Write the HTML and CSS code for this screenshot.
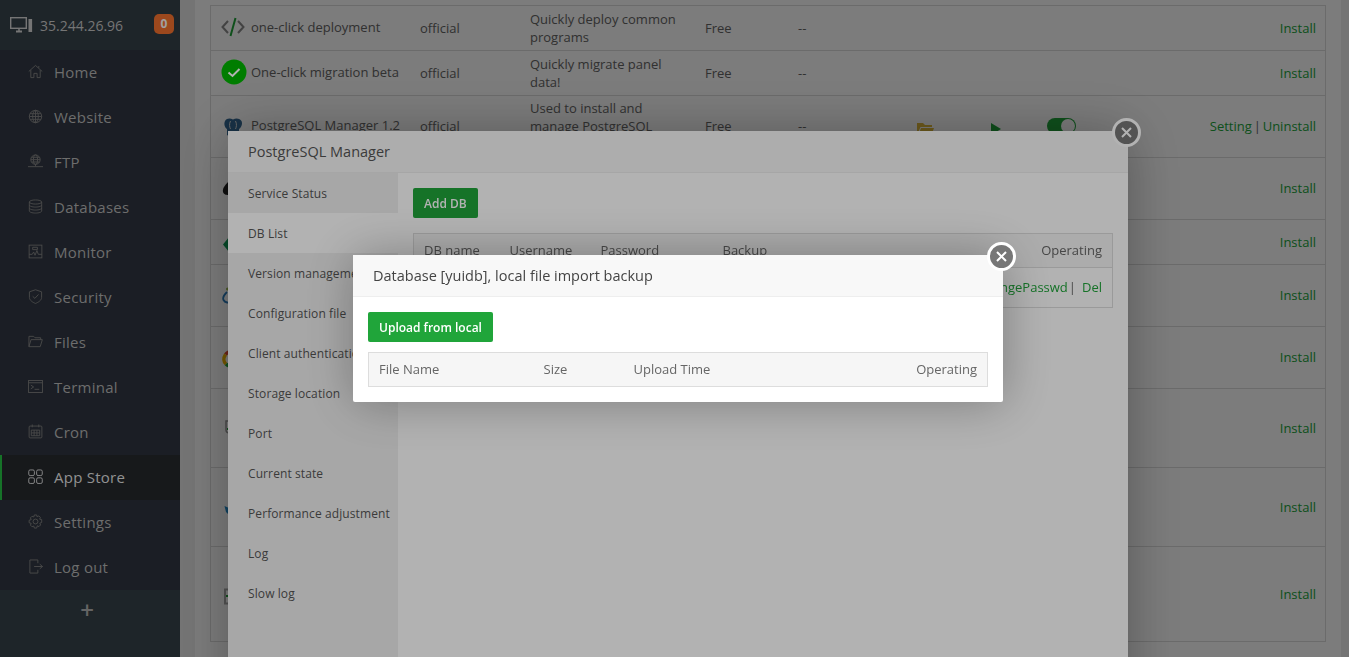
FILE: index.html
```html
<!DOCTYPE html>
<html lang="en">
<head>
<meta charset="utf-8">
<title>App Store</title>
<link rel="stylesheet" href="styles.css">
</head>
<body>
<aside class="sidebar">
  <div class="server">
    <svg class="server-icon" width="23" height="16" viewBox="0 0 23 16" fill="none" stroke="currentColor"><rect x="0.7" y="0.7" width="15.6" height="10.6" stroke-width="1.4"/><path d="M6 14.5h6" stroke-width="2"/><path d="M9 11.5v3" stroke-width="1.5"/><rect x="18.5" y="2" width="3.6" height="13" fill="currentColor" stroke="none"/></svg>
    <span class="server-ip">35.244.26.96</span>
    <span class="badge">0</span>
  </div>
  <nav class="nav">
    <a class="nav-item"><svg class="nav-icon" viewBox="0 0 16 16"><path d="M0.8 8 8 1.5 15.2 8M3 6.5V14.5H6.3V10H9.7V14.5H13V6.5M11.5 2.2V4"/></svg>Home</a>
    <a class="nav-item"><svg class="nav-icon" viewBox="0 0 16 16"><circle cx="8" cy="8" r="6.6"/><ellipse cx="8" cy="8" rx="3" ry="6.6"/><path d="M8 1.4V14.6M1.4 8H14.6M2.3 5H13.7M2.3 11H13.7"/></svg>Website</a>
    <a class="nav-item"><svg class="nav-icon" viewBox="0 0 16 16"><circle cx="8" cy="6" r="5"/><ellipse cx="8" cy="6" rx="2.2" ry="5"/><path d="M3 6H13M3.8 3.5H12.2M3.8 8.5H12.2M8 11V13M0 13.5H16"/></svg>FTP</a>
    <a class="nav-item"><svg class="nav-icon" viewBox="0 0 16 16"><ellipse cx="8" cy="3.2" rx="6.6" ry="2.2"/><path d="M1.4 3.2V12.8C1.4 14 4.4 15 8 15S14.6 14 14.6 12.8V3.2M1.4 6.4C1.4 7.6 4.4 8.6 8 8.6S14.6 7.6 14.6 6.4M1.4 9.6C1.4 10.8 4.4 11.8 8 11.8S14.6 10.8 14.6 9.6"/></svg>Databases</a>
    <a class="nav-item"><svg class="nav-icon" viewBox="0 0 16 16"><rect x="1.2" y="1.2" width="13.6" height="13.6"/><path d="M1.2 11H4.5L6 8.5 7.5 12 9.5 7 11 11H14.8M5 3.5H10V6H5Z"/></svg>Monitor</a>
    <a class="nav-item"><svg class="nav-icon" viewBox="0 0 16 16"><path d="M8 0.8 14.5 3V9C14.5 12 11 14.3 8 15.4 5 14.3 1.5 12 1.5 9V3Z"/><path d="M5 7.8 7.3 10 11.2 5.8"/></svg>Security</a>
    <a class="nav-item"><svg class="nav-icon" viewBox="0 0 16 16"><path d="M1 13.5V2.5H6L7.5 4H13.5V6M1 13.5H13L15.3 6H3.2L1 13.5Z"/></svg>Files</a>
    <a class="nav-item"><svg class="nav-icon" viewBox="0 0 16 16"><rect x="0.6" y="1.6" width="14.8" height="12.8"/><path d="M0.6 4H15.4M3 6.5 6 8.5 3 10.5M7 11H12"/></svg>Terminal</a>
    <a class="nav-item"><svg class="nav-icon" viewBox="0 0 16 16"><rect x="1.2" y="2.2" width="13.6" height="12.6" rx="1"/><path d="M4.5 0.5V3.5M11.5 0.5V3.5M3.5 6.5H12.5V12.5H3.5ZM3.5 9.5H12.5M6.5 6.5V12.5M9.5 6.5V12.5"/></svg>Cron</a>
    <a class="nav-item nav-item-active"><svg class="nav-icon nav-icon-active" viewBox="0 0 16 16"><rect x="0.8" y="1" width="6" height="6" rx="1.5"/><rect x="9.2" y="1" width="6" height="6" rx="1.5"/><rect x="0.8" y="9.4" width="6" height="6" rx="1.5"/><rect x="9.2" y="9.4" width="6" height="6" rx="1.5"/></svg>App Store</a>
    <a class="nav-item"><svg class="nav-icon" viewBox="0 0 16 16"><circle cx="8" cy="8" r="2.6"/><path d="M6.8 1H9.2L9.7 3 11.5 2 13.2 3.7 12.4 5.5 14.6 6V9L12.6 9.8 13.4 11.7 11.7 13.4 9.9 12.6 9.2 15H6.8L6.1 12.8 4.3 13.6 2.6 11.9 3.4 10 1.2 9.3V6.7L3.4 6 2.6 4.1 4.3 2.4 6.1 3.2Z"/></svg>Settings</a>
    <a class="nav-item"><svg class="nav-icon" viewBox="0 0 16 16"><path d="M10.5 4.5V1H2V15H10.5V11.5M6.5 8H15.5M12.5 5.5 15.5 8 12.5 10.5"/></svg>Log out</a>
  </nav>
  <div class="add-shortcut">+</div>
</aside>

<main class="main">
  <div class="card">
    <table class="soft-table">
      <tbody>
        <tr class="row-45">
          <td class="col-name"><span class="soft-name"><svg class="soft-icon" viewBox="0 0 24 24" fill="none" stroke-width="2"><path d="M7 6 1.500 12 7 18M17 6 22.500 12 17 18" stroke="#8a8a8a"/><path d="M14.500 3 9.500 21" stroke="#20a53a"/></svg>one-click deployment</span></td>
          <td class="col-type">official</td>
          <td class="col-desc">Quickly deploy common programs</td>
          <td class="col-price">Free</td>
          <td class="col-expire">--</td>
          <td class="col-dir"></td><td class="col-run"></td><td class="col-home"></td>
          <td class="col-act"><a class="link">Install</a></td>
        </tr>
        <tr class="row-45">
          <td class="col-name"><span class="soft-name"><svg class="soft-icon soft-icon-big" viewBox="0 0 26 26"><circle cx="13" cy="13" r="12.500" fill="#00b400"/><path d="M7.500 13.500 11.500 17 18.500 10" fill="none" stroke="#fff" stroke-width="2"/></svg>One-click migration beta</span></td>
          <td class="col-type">official</td>
          <td class="col-desc">Quickly migrate panel data!</td>
          <td class="col-price">Free</td>
          <td class="col-expire">--</td>
          <td class="col-dir"></td><td class="col-run"></td><td class="col-home"></td>
          <td class="col-act"><a class="link">Install</a></td>
        </tr>
        <tr class="row-62">
          <td class="col-name"><span class="soft-name"><svg class="soft-icon" viewBox="0 0 24 24"><path d="M4 8C6 5 9 5 12 6.500 15 5 18 5 20.500 8 22 11 20 15 18 16V22C16 24 14.500 22 14.500 18H10C10 22 8 24 6 22V16C4 15 2.500 11 4 8Z" fill="#336791"/><path d="M9.500 8C8 11 8.500 14 9.500 16M14.500 8C16 11 15.500 14 14.500 16" fill="none" stroke="#d8d8d8" stroke-width="1"/></svg>PostgreSQL Manager 1.2</span></td>
          <td class="col-type">official</td>
          <td class="col-desc">Used to install and manage PostgreSQL database</td>
          <td class="col-price">Free</td>
          <td class="col-expire">--</td>
          <td class="col-dir"><svg class="dir-icon" width="17" height="14" viewBox="0 0 17 14"><path d="M0 13V1H6L8 3H15V5H3.500L0 13ZM1 14 4 6H17L14 14Z" fill="#e0b93a"/></svg></td>
          <td class="col-run"><svg class="run-icon" width="10" height="12" viewBox="0 0 10 12"><path d="M0 0 10 6 0 12Z" fill="#20a53a"/></svg></td>
          <td class="col-home"><span class="toggle"><span class="toggle-knob"></span></span></td>
          <td class="col-act"><a class="link">Setting</a> | <a class="link">Uninstall</a></td>
        </tr>
        <tr class="row-62"><td class="col-name"><span class="soft-name"><svg class="soft-icon" viewBox="0 0 24 24"><path d="M8 6C5 9 1 13 2 17 3 20 6 20 8 20Z" fill="#222"/></svg></span></td><td colspan="7"></td><td class="col-act"><a class="link">Install</a></td></tr>
        <tr class="row-45"><td class="col-name"><span class="soft-name"><svg class="soft-icon" viewBox="0 0 24 24"><path d="M2 15.500 8 8V23Z" fill="#0f9d58"/></svg></span></td><td colspan="7"></td><td class="col-act"><a class="link">Install</a></td></tr>
        <tr class="row-62"><td class="col-name"><span class="soft-name"><svg class="soft-icon" viewBox="0 0 24 24" fill="none"><path d="M6 10C3 13 1.500 16 2.500 18 4 21 8 21 10 20" stroke="#2c7ec0" stroke-width="1.800"/><circle cx="6.500" cy="7" r="1.500" fill="#9aba4a"/></svg></span></td><td colspan="7"></td><td class="col-act"><a class="link">Install</a></td></tr>
        <tr class="row-62"><td class="col-name"><span class="soft-name"><svg class="soft-icon" viewBox="0 0 24 24" fill="none" stroke-width="3.500"><path d="M7.500 8C6 8.800 5.200 9.500 4.500 10.500" stroke="#e04a2f"/><path d="M4.500 10.500C2.200 14 2.500 18 5 20" stroke="#f0b400"/><path d="M5 20C6 21 7 21.500 8.500 22" stroke="#20a53a"/></svg></span></td><td colspan="7"></td><td class="col-act"><a class="link">Install</a></td></tr>
        <tr class="row-79"><td class="col-name"><span class="soft-name"><svg class="soft-icon" viewBox="0 0 24 24" fill="none"><path d="M9 6H5V15C5 16.500 6.500 18 9 18.500" stroke="#999" stroke-width="1.500"/><path d="M6 14H9" stroke="#20a53a" stroke-width="2"/></svg></span></td><td colspan="7"></td><td class="col-act"><a class="link">Install</a></td></tr>
        <tr class="row-79"><td class="col-name"><span class="soft-name"><svg class="soft-icon" viewBox="0 0 24 24"><path d="M3.500 12 8 14V21L5 18Z" fill="#1e88c9"/></svg></span></td><td colspan="7"></td><td class="col-act"><a class="link">Install</a></td></tr>
        <tr class="row-95"><td class="col-name"><span class="soft-name"><svg class="soft-icon" viewBox="0 0 24 24" fill="none"><path d="M9 8.500H4V22.500H9" stroke="#aaa" stroke-width="2"/><path d="M5 15H9" stroke="#20a53a" stroke-width="2"/></svg></span></td><td colspan="7"></td><td class="col-act"><a class="link">Install</a></td></tr>
      </tbody>
    </table>
  </div>
</main>

<div class="shade shade-lower"></div>
<section class="dialog dialog-manager">
  <button class="close close-manager"><svg class="close-x" viewBox="0 0 11 11"><path d="M1 1 10 10M10 1 1 10"/></svg></button>
  <header class="dialog-title manager-title">PostgreSQL Manager</header>
  <div class="manager-body">
    <ul class="manager-menu">
      <li>Service Status</li>
      <li class="menu-active">DB List</li>
      <li>Version management</li>
      <li>Configuration file</li>
      <li>Client authentication</li>
      <li>Storage location</li>
      <li>Port</li>
      <li>Current state</li>
      <li>Performance adjustment</li>
      <li>Log</li>
      <li>Slow log</li>
    </ul>
    <div class="manager-content">
      <button class="btn">Add DB</button>
      <table class="db-table">
        <thead>
          <tr><th class="db-name">DB name</th><th class="db-user">Username</th><th class="db-pass">Password</th><th>Backup</th><th class="cell-end">Operating</th></tr>
        </thead>
        <tbody>
          <tr><td></td><td></td><td></td><td></td><td class="cell-end"><a class="link">ChangePasswd</a><span class="sep">|</span><a class="link">Del</a></td></tr>
        </tbody>
      </table>
    </div>
  </div>
</section>

<div class="shade shade-upper"></div>
<section class="dialog dialog-import">
  <button class="close close-import"><svg class="close-x" viewBox="0 0 11 11"><path d="M1 1 10 10M10 1 1 10"/></svg></button>
  <header class="dialog-title import-title">Database [yuidb], local file import backup</header>
  <div class="import-body">
    <button class="btn btn-upload">Upload from local</button>
    <table class="file-table">
      <thead>
        <tr><th class="file-name">File Name</th><th class="file-size">Size</th><th>Upload Time</th><th class="cell-end">Operating</th></tr>
      </thead>
    </table>
  </div>
</section>
</body>
</html>
```
FILE: styles.css
```css
* { box-sizing: border-box; }
html, body { height: 100%; }
body {
  margin: 0;
  display: flex;
  height: 657px;
  overflow: hidden;
  background: #f0f0f0;
  color: #666;
  font-family: "Open Sans", "Liberation Sans", sans-serif;
  font-size: 13px;
}
a { text-decoration: none; }
ul { list-style: none; margin: 0; padding: 0; }

/* sidebar */
.sidebar {
  position: relative;
  z-index: 2;
  flex: 0 0 180px;
  background: #2c363c;
}
.server {
  height: 50px;
  display: flex;
  align-items: center;
  padding: 0 6px 0 10px;
  color: #a8a8a8;
  font-size: 14px;
}
.server-icon { margin-right: 7px; flex: none; }
.server-ip { flex: 1; }
.badge {
  width: 20px;
  height: 20px;
  margin-top: -3px;
  border-radius: 5px;
  background: #e0682a;
  color: #e6e6e6;
  font-size: 12px;
  font-weight: 700;
  text-align: center;
  line-height: 20px;
}
.nav { background: #272c35; }
.nav-item {
  height: 45px;
  display: flex;
  align-items: center;
  gap: 11px;
  padding: 0 0 2px 28px;
  color: #9c9c9c;
  font-size: 15px;
  letter-spacing: 0.25px;
}
.nav-icon {
  width: 15px;
  height: 15px;
  flex: none;
  fill: none;
  stroke: #6a6a6a;
  stroke-width: 1;
}
.nav-icon-active { stroke: #c6c6c6; }
.nav-item-active {
  background: #212428;
  color: #d0d0d0;
  box-shadow: inset 2px 0 0 #20a53a;
}
.add-shortcut {
  text-align: center;
  color: #909090;
  font-size: 24px;
  font-weight: 600;
  line-height: 40px;
  margin-left: -6px;
}

/* page */
.main {
  flex: 1;
  min-width: 0;
  padding: 0 8px 0 15px;
}
.card {
  height: 100%;
  background: #fff;
  padding: 5px 15px 0;
}
.soft-table {
  width: 100%;
  table-layout: fixed;
  border-collapse: separate;
  border-spacing: 0;
  border: 1px solid #ddd;
  border-bottom: 0;
}
.soft-table td {
  padding: 0 10px;
  border-bottom: 1px solid #ddd;
  line-height: 18px;
}
.row-45 td { height: 45px; }
.row-62 td { height: 62px; padding-bottom: 2px; }
.row-79 td { height: 79px; }
.row-95 td { height: 95px; }
.col-name { width: 199px; }
.col-type { width: 110px; }
.col-desc { width: 175px; }
.col-price { width: 93px; }
.col-expire { width: 117px; }
.col-dir { width: 40px; }
.col-run { width: 92px; }
.col-home { width: 80px; }
.soft-table .col-act {
  padding-right: 9px;
  text-align: right;
  color: #666;
  word-spacing: -1.5px;
}
.soft-name {
  display: flex;
  align-items: center;
  gap: 6px;
  margin-top: -2px;
  white-space: nowrap;
}
.soft-icon { width: 24px; height: 24px; flex: none; }
.soft-icon-big {
  position: relative;
  z-index: 2;
  width: 26px;
  height: 26px;
  margin-right: -2px;
}
.link { color: #20a53a; }
.dir-icon { display: block; margin: 6px auto 0; }
.run-icon { display: block; margin: 6px 0 0 36px; }
.toggle {
  display: block;
  width: 29px;
  height: 16px;
  margin-top: 1px;
  border-radius: 8px;
  background: #20a53a;
  position: relative;
}
.toggle-knob {
  position: absolute;
  right: 1px;
  top: 1px;
  width: 14px;
  height: 14px;
  border-radius: 50%;
  background: #fff;
}

/* overlays */
.shade {
  position: fixed;
  inset: 0;
  background: rgba(0, 0, 0, 0.3);
}
.shade-lower { z-index: 1; }
.shade-upper { z-index: 3; }
.dialog {
  position: fixed;
  background: #fff;
  box-shadow: 1px 1px 50px rgba(0, 0, 0, 0.3);
}
.dialog-manager {
  z-index: 1;
  left: 228px;
  top: 131px;
  width: 900px;
  height: 660px;
}
.dialog-import {
  z-index: 4;
  left: 353px;
  top: 255px;
  width: 650px;
  height: 147px;
  border-radius: 2px;
}
.dialog-title {
  height: 42px;
  padding-left: 20px;
  line-height: 41px;
  font-size: 14.5px;
  background: #f8f8f8;
  border-bottom: 1px solid #eee;
}
.manager-title { color: #555; }
.import-title { color: #444; }
.close {
  position: absolute;
  display: flex;
  align-items: center;
  justify-content: center;
  width: 29px;
  height: 29px;
  padding: 0;
  border: 3px solid #fff;
  border-radius: 50%;
  background: #777;
}
.close-x {
  width: 11px;
  height: 11px;
  fill: none;
  stroke: #fff;
  stroke-width: 2;
}
.close-manager { left: 884px; top: -13px; }
.close-import { left: 634px; top: -13px; }

.manager-body { display: flex; height: 618px; }
.manager-menu { flex: 0 0 170px; background: #f0f0f0; overflow: hidden; }
.manager-menu li {
  height: 40px;
  padding: 1px 0 0 20px;
  line-height: 40px;
  font-size: 12px;
  letter-spacing: 0.1px;
  color: #555;
  white-space: nowrap;
}
.manager-menu .menu-active { background: #fff; }
.manager-content { flex: 1; padding: 15px; }
.btn {
  display: block;
  height: 30px;
  padding: 0 11px;
  border: 0;
  border-radius: 2px;
  background: #20a53a;
  color: #fff;
  font: 600 12px "Open Sans", "Liberation Sans", sans-serif;
}
.db-table, .file-table {
  width: 100%;
  border-collapse: collapse;
  color: #666;
}
.db-table { margin-top: 15px; table-layout: fixed; }
.db-table th, .db-table td {
  padding: 0 10px 2px;
  border: 1px solid #ddd;
  border-width: 1px 0;
  font-weight: 400;
  text-align: left;
  white-space: nowrap;
}
.db-table th { height: 34px; background: #f6f6f6; }
.db-table td { height: 40px; }
.db-table tr > :first-child { border-left: 1px solid #ddd; }
.db-table tr > :last-child { border-right: 1px solid #ddd; }
.db-name { width: 86px; }
.db-user { width: 91px; }
.db-pass { width: 122px; }
.cell-end { text-align: right !important; }
.sep { margin: 0 6px 0 1px; color: #666; }

.import-body { padding: 15px; }
.file-table { margin-top: 10px; table-layout: fixed; }
.file-table th {
  height: 34px;
  padding: 0 10px 2px;
  background: #f6f6f6;
  border: 1px solid #ddd;
  border-width: 1px 0;
  font-weight: 400;
  text-align: left;
}
.file-table th:first-child { border-left: 1px solid #ddd; }
.file-table th:last-child { border-right: 1px solid #ddd; }
.file-name { width: 165px; }
.file-size { width: 90px; }
```
